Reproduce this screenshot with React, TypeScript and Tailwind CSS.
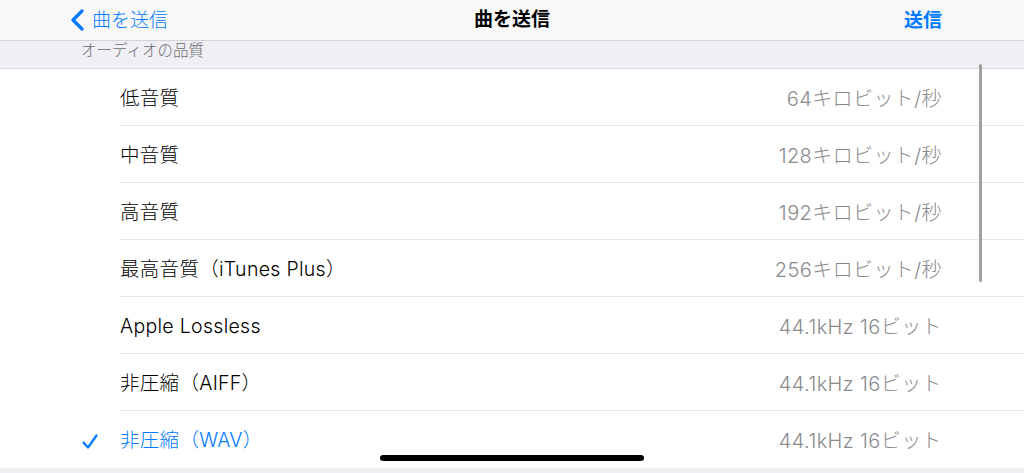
import React from "react";

const rows: { label: string; value: string; checked?: boolean }[] = [
  { label: "低音質", value: "64キロビット/秒" },
  { label: "中音質", value: "128キロビット/秒" },
  { label: "高音質", value: "192キロビット/秒" },
  { label: "最高音質（iTunes Plus）", value: "256キロビット/秒" },
  { label: "Apple Lossless", value: "44.1kHz 16ビット" },
  { label: "非圧縮（AIFF）", value: "44.1kHz 16ビット" },
  { label: "非圧縮（WAV）", value: "44.1kHz 16ビット", checked: true },
];

export default function App() {
  return (
    <div
      className="relative w-[1024px] h-[473px] overflow-hidden bg-[#efeff4]"
      style={{ fontFamily: 'Inter, "Noto Sans CJK JP", sans-serif' }}
    >
      <div className="h-[41px] bg-[#f8f8f8] border-b border-[#d1d1d6] flex items-center relative">
        <div className="flex items-center pl-[70px] text-[#007aff] text-[19px] leading-none">
          <svg width="16" height="22" viewBox="0 0 16 22" className="mr-[6px]">
            <path d="M12 2 L3 11 L12 20" fill="none" stroke="#007aff" strokeWidth="3.2" strokeLinecap="round" strokeLinejoin="round" />
          </svg>
          <span className="font-light">曲を送信</span>
        </div>
        <div className="absolute left-0 right-0 top-0 h-[40px] flex items-center justify-center text-[19px] font-semibold text-black pointer-events-none">
          曲を送信
        </div>
        <div className="ml-auto pr-[82px] text-[#007aff] text-[19px] font-semibold leading-none">送信</div>
      </div>
      <div className="h-[28px] border-b border-[#dcdce0] pl-[81px] pt-[1px] text-[15.5px] leading-[18px] text-[#6d6d72] font-light">
        オーディオの品質
      </div>
      <div className="bg-white">
        {rows.map((r, i) => (
          <div key={i} className="flex items-stretch h-[57px]">
            <div className="w-[120px] flex items-center justify-start pl-[82px] pt-[4px]">
              {r.checked && (
                <svg width="16" height="16" viewBox="0 0 16 16">
                  <path d="M1.5 8.5 L6 13.5 L14.5 1.5" fill="none" stroke="#007aff" strokeWidth="2.2" strokeLinecap="round" strokeLinejoin="round" />
                </svg>
              )}
            </div>
            <div
              className={`flex-1 flex items-center justify-between pr-[82px] pt-[3px] ${
                i < rows.length - 1 ? "border-b border-[#e5e5ea]" : ""
              }`}
            >
              <span className={`text-[19.5px] font-light tracking-[0.3px] ${r.checked ? "text-[#007aff]" : "text-black"}`}>{r.label}</span>
              <span className="text-[20px] font-light tracking-[0.4px] text-[#8a8a8e]">{r.value}</span>
            </div>
          </div>
        ))}
      </div>
      <div className="absolute left-[979px] top-[64px] w-[3px] h-[218px] rounded-full bg-[#a0a0a0]" />
      <div className="absolute left-[380px] top-[455px] w-[264px] h-[6px] rounded-full bg-black" />
    </div>
  );
}
